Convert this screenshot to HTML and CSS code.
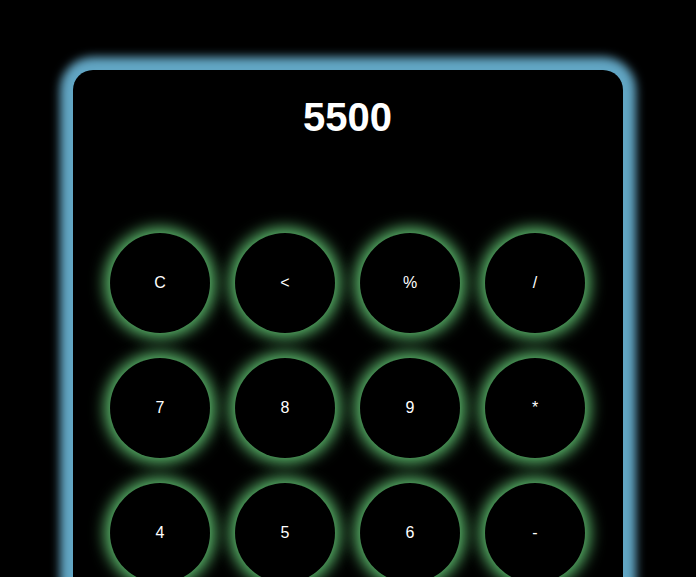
FILE: index.html
```html
<!DOCTYPE html>
<html lang="en">
<head>
<meta charset="utf-8">
<title>Calculator</title>
<link rel="stylesheet" href="styles.css">
</head>
<body>
<div class="calculator">
  <div class="display">5500</div>
  <div class="keys">
    <button class="key">C</button>
    <button class="key">&lt;</button>
    <button class="key">%</button>
    <button class="key">/</button>
    <button class="key">7</button>
    <button class="key">8</button>
    <button class="key">9</button>
    <button class="key">*</button>
    <button class="key">4</button>
    <button class="key">5</button>
    <button class="key">6</button>
    <button class="key">-</button>
    <button class="key">1</button>
    <button class="key">2</button>
    <button class="key">3</button>
    <button class="key">+</button>
    <button class="key">0</button>
    <button class="key">00</button>
    <button class="key">.</button>
    <button class="key">=</button>
  </div>
</div>
</body>
</html>
```
FILE: styles.css
```css
html, body {
  margin: 0;
  padding: 0;
  background: #000;
  font-family: "Liberation Sans", Arial, sans-serif;
}

body {
  padding-top: 70px;
}

.calculator {
  width: 550px;
  margin: 0 auto;
  background: #000;
  border-radius: 20px;
  box-shadow: 0 0 10px 13px #62a6c4;
  padding: 24px 38px 40px 37px;
  box-sizing: border-box;
}

.display {
  color: #fff;
  font-weight: bold;
  font-size: 40px;
  line-height: 46px;
  text-align: center;
  height: 139px;
}

.keys {
  display: grid;
  grid-template-columns: repeat(4, 100px);
  gap: 25px;
}

.key {
  width: 100px;
  height: 100px;
  border-radius: 50%;
  border: none;
  background: #000;
  color: #fff;
  font-family: "Liberation Sans", Arial, sans-serif;
  font-size: 16px;
  box-shadow: 0 0 15px 5px #5ebe6f;
  padding: 0;
}
```
